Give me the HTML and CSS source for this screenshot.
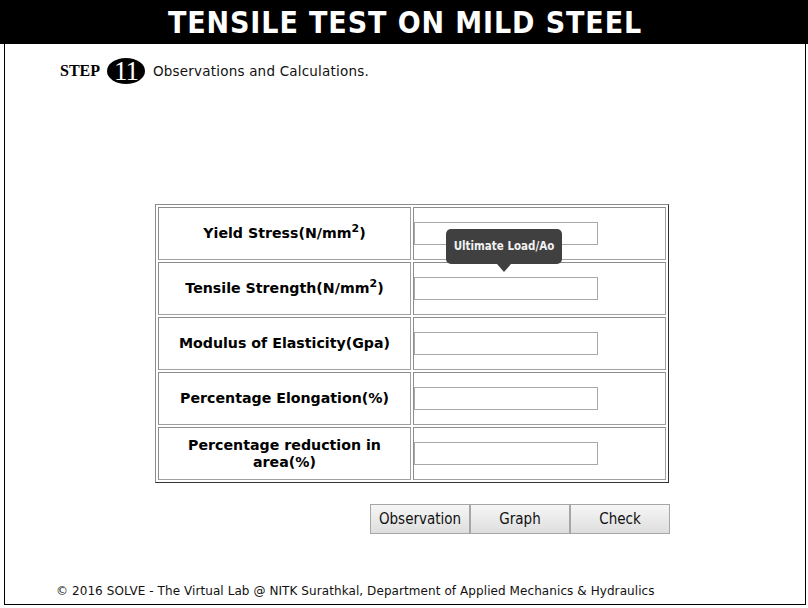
FILE: index.html
```html
<!DOCTYPE html>
<html>
<head>
<meta charset="utf-8">
<title>Tensile Test on Mild Steel</title>
<link rel="stylesheet" href="styles.css">
</head>
<body>
<header class="title">TENSILE TEST ON MILD STEEL</header>
<main class="frame">
  <div class="step">
    <span class="step-word">STEP</span>
    <span class="badge">11</span>
    <span class="step-text">Observations and Calculations.</span>
  </div>
  <table class="obs">
    <tr>
      <td class="label">Yield Stress(N/mm<sup>2</sup>)</td>
      <td class="field"><input type="text"></td>
    </tr>
    <tr>
      <td class="label">Tensile Strength(N/mm<sup>2</sup>)</td>
      <td class="field"><span class="tip-wrap"><input type="text"><span class="tooltip">Ultimate Load/Ao</span></span></td>
    </tr>
    <tr>
      <td class="label">Modulus of Elasticity(Gpa)</td>
      <td class="field"><input type="text"></td>
    </tr>
    <tr>
      <td class="label">Percentage Elongation(%)</td>
      <td class="field"><input type="text"></td>
    </tr>
    <tr>
      <td class="label">Percentage reduction in<br>area(%)</td>
      <td class="field"><input type="text"></td>
    </tr>
  </table>
  <div class="actions"><button class="btn">Observation</button><button class="btn">Graph</button><button class="btn">Check</button></div>
  <footer class="foot">© 2016 SOLVE - The Virtual Lab @ NITK Surathkal, Department of Applied Mechanics &amp; Hydraulics</footer>
</main>
</body>
</html>
```

FILE: styles.css
```css
html, body {
  margin: 0;
  padding: 0;
  background: #fff;
}
body {
  width: 808px;
  height: 608px;
  overflow: hidden;
  font-family: "DejaVu Sans", sans-serif;
}
.title {
  height: 44px;
  background: #000;
  color: #fff;
  text-align: center;
  font-family: "DejaVu Sans Condensed", "DejaVu Sans", sans-serif;
  font-stretch: condensed;
  font-weight: bold;
  font-size: 30px;
  line-height: 46px;
  letter-spacing: 0.9px;
  padding-left: 2px;
}
.frame {
  box-sizing: border-box;
  margin: 0 2px 0 4px;
  height: 561px;
  border: 1px solid #000;
  border-top: none;
  display: flex;
  flex-direction: column;
}
.step {
  display: flex;
  align-items: center;
  margin: 14px 0 0 55px;
  height: 26px;
}
.step-word {
  font-family: "Liberation Serif", serif;
  font-weight: bold;
  font-size: 16px;
  margin-right: 7px;
}
.badge {
  width: 38px;
  height: 26px;
  border-radius: 50%;
  background: #000;
  color: #fff;
  font-family: "Liberation Serif", serif;
  font-size: 27px;
  line-height: 26px;
  text-align: center;
  letter-spacing: -1px;
  margin-right: 8px;
}
.step-text {
  font-size: 13.5px;
  letter-spacing: 0.2px;
  color: #111;
}
.obs {
  margin: 120px 0 0 150px;
  width: 514px;
  border-collapse: separate;
  border-spacing: 2px;
  border: 1px solid;
  border-color: #8c8c8c #333 #333 #8c8c8c;
}
.obs td {
  box-sizing: border-box;
  height: 53px;
  width: 253px;
  border: 1px solid;
  border-color: #8c8c8c #a0a0a0 #a0a0a0 #8c8c8c;
  padding: 0;
}
.label {
  text-align: center;
  font-family: "DejaVu Sans", sans-serif;
  font-weight: bold;
  font-size: 14.2px;
  line-height: 17px;
  color: #000;
}
.label sup {
  font-size: 11px;
  line-height: 0;
  vertical-align: 6px;
}
.field {
  vertical-align: middle;
}
.field input {
  box-sizing: border-box;
  width: 184px;
  height: 23px;
  margin: 0;
  border: 1px solid #a9a9a9;
  background: #fff;
  display: block;
}
.tip-wrap {
  position: relative;
  display: block;
  width: 184px;
}
.tooltip {
  position: absolute;
  left: 32px;
  bottom: 36px;
  width: 116px;
  height: 35px;
  box-sizing: border-box;
  background: #404040;
  color: #f2f2f2;
  border-radius: 5px;
  font-family: "DejaVu Sans Condensed", "DejaVu Sans", sans-serif;
  font-stretch: condensed;
  font-size: 11.5px;
  font-weight: bold;
  line-height: 35px;
  text-align: center;
}
.tooltip::after {
  content: "";
  position: absolute;
  left: 50%;
  top: 100%;
  margin-left: -7px;
  border-style: solid;
  border-width: 8px 7px 0 7px;
  border-color: #404040 transparent transparent transparent;
}
.actions {
  display: flex;
  margin: 21px 0 0 365px;
}
.btn {
  box-sizing: border-box;
  width: 100px;
  height: 30px;
  margin: 0;
  border: 1px solid #a6a6a6;
  border-radius: 0;
  background: linear-gradient(#f6f6f6, #dedede);
  font-family: "DejaVu Sans Condensed", "DejaVu Sans", sans-serif;
  font-stretch: condensed;
  font-size: 15px;
  color: #111;
  padding: 0;
}
.foot {
  margin: 50px 0 0 51px;
  font-size: 12px;
  letter-spacing: 0.08px;
  color: #111;
}
```
